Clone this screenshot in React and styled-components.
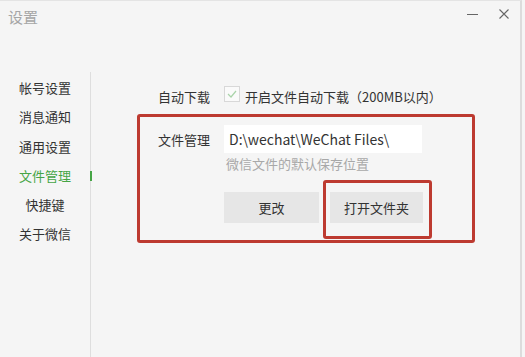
import React from "react";
import styled, { createGlobalStyle } from "styled-components";

const GlobalStyle = createGlobalStyle`
    html, body {
        margin: 0;
        padding: 0;
        background: #f5f5f5;
    }
    body {
        font-family: "Noto Sans CJK SC", "Noto Sans", sans-serif;
        color: #333;
        overflow: hidden;
    }
`;

const Window = styled.div`
    width: 520px;
    height: 356px;
    border-top: 1px solid #e4e4e4;
    border-right: 2px solid #dcdcdc;
    background: #f5f5f5;
    display: flex;
    flex-direction: column;
`;

const TitleBar = styled.div`
    height: 71px;
    display: flex;
    align-items: flex-start;
    justify-content: space-between;
    padding: 0 0 0 8px;
`;

const Title = styled.div`
    font-size: 15px;
    line-height: 20px;
    margin-top: 6px;
    color: #a6a6a6;
`;

const Controls = styled.div`
    display: flex;
    align-items: center;
    gap: 20px;
    margin: 7px 10px 0 0;
`;

const ControlBtn = styled.div`
    width: 12px;
    height: 12px;
    display: flex;
    align-items: center;
    justify-content: center;
`;

const Body = styled.div`
    flex: 1;
    display: flex;
`;

const Sidebar = styled.nav`
    width: 90px;
    border-right: 1px solid #dedede;
    padding-top: 1px;
    display: flex;
    flex-direction: column;
`;

const NavItem = styled.div`
    position: relative;
    height: 29.3px;
    line-height: 29.3px;
    font-size: 13px;
    text-align: center;
    color: ${p => (p.$active ? "#46a546" : "#333")};

    &::after {
        content: "";
        display: ${p => (p.$active ? "block" : "none")};
        position: absolute;
        right: -2px;
        top: 10px;
        width: 2px;
        height: 10px;
        background: #46a546;
    }
`;

const Content = styled.main`
    flex: 1;
    padding: 14px 0 0 46px;
    display: flex;
    flex-direction: column;
`;

const Row = styled.div`
    display: flex;
    align-items: center;
    padding-left: ${p => p.$indent || 0}px;
    height: ${p => p.$h || 20}px;
`;

const Label = styled.div`
    width: 66px;
    font-size: 13px;
    color: #333;
`;

const Check = styled.div`
    width: 14px;
    height: 14px;
    border: 1px solid #d8d8d8;
    background: #fafafa;
    margin: -4px 5px 0 0;
    display: flex;
    align-items: center;
    justify-content: center;
`;

const CheckText = styled.span`
    font-size: 13px;
    color: #333;
`;

const RedBox = styled.section`
    box-sizing: border-box;
    margin-top: 8px;
    width: 338px;
    border: 3px solid #bd3a30;
    border-radius: 3px;
    padding: 8px 0 1px 18px;
    display: flex;
    flex-direction: column;
`;

const PathInput = styled.div`
    width: 193px;
    height: 28px;
    background: #fff;
    padding-left: 5px;
    display: flex;
    align-items: center;
    font-size: 14px;
    color: #333;
`;

const Hint = styled.div`
    margin: 4px 0 0 68px;
    font-size: 13px;
    line-height: 14px;
    color: #a8a8a8;
`;

const ButtonRow = styled.div`
    display: flex;
    align-items: flex-start;
    gap: 4px;
    margin: 9px 0 0 66px;
`;

const Button = styled.div`
    width: ${p => p.$w}px;
    height: 31px;
    margin-top: ${p => p.$mt || 0}px;
    background: #e6e6e6;
    font-size: 13px;
    color: #333;
    display: flex;
    align-items: center;
    justify-content: center;
`;

const Mark = styled.div`
    border: 3px solid #bd3a30;
    border-radius: 3px;
    padding: 9px 6px 13px 4px;
`;

const navs = ["帐号设置", "消息通知", "通用设置", "文件管理", "快捷键", "关于微信"];

export default function App() {
    return (
        <>
            <GlobalStyle />
            <Window>
                <TitleBar>
                    <Title>设置</Title>
                    <Controls>
                        <ControlBtn>
                            <svg width="11" height="11" viewBox="0 0 11 11">
                                <line x1="0" y1="5.5" x2="11" y2="5.5" stroke="#666" strokeWidth="1" />
                            </svg>
                        </ControlBtn>
                        <ControlBtn>
                            <svg width="10" height="10" viewBox="0 0 10 10">
                                <path d="M0.5 0.5 L9.5 9.5 M9.5 0.5 L0.5 9.5" stroke="#666" strokeWidth="1.1" />
                            </svg>
                        </ControlBtn>
                    </Controls>
                </TitleBar>
                <Body>
                    <Sidebar>
                        {navs.map(n => (
                            <NavItem key={n} $active={n === "文件管理"}>{n}</NavItem>
                        ))}
                    </Sidebar>
                    <Content>
                        <Row $indent={21}>
                            <Label>自动下载</Label>
                            <Check>
                                <svg width="10" height="8" viewBox="0 0 10 8">
                                    <path d="M1 4 L4 7 L9 1" fill="none" stroke="#a9d3a9" strokeWidth="1.2" />
                                </svg>
                            </Check>
                            <CheckText>开启文件自动下载（200MB以内）</CheckText>
                        </Row>
                        <RedBox>
                            <Row $h={28}>
                                <Label>文件管理</Label>
                                <PathInput>D:\wechat\WeChat Files\</PathInput>
                            </Row>
                            <Hint>微信文件的默认保存位置</Hint>
                            <ButtonRow>
                                <Button $w={95} $mt={12}>更改</Button>
                                <Mark>
                                    <Button $w={93}>打开文件夹</Button>
                                </Mark>
                            </ButtonRow>
                        </RedBox>
                    </Content>
                </Body>
            </Window>
        </>
    );
}
